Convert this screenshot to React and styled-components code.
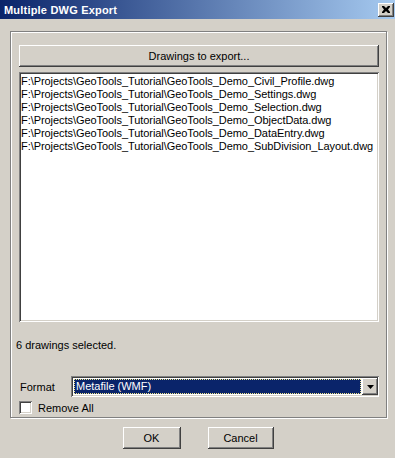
import React from "react";
import styled, { createGlobalStyle } from "styled-components";

const GlobalStyle = createGlobalStyle`
  body {
    margin: 0;
    font-family: "Liberation Sans", Arial, sans-serif;
    font-size: 11px;
    color: #000;
    background: #d4d0c8;
  }
`;

const files = [
  "F:\\Projects\\GeoTools_Tutorial\\GeoTools_Demo_Civil_Profile.dwg",
  "F:\\Projects\\GeoTools_Tutorial\\GeoTools_Demo_Settings.dwg",
  "F:\\Projects\\GeoTools_Tutorial\\GeoTools_Demo_Selection.dwg",
  "F:\\Projects\\GeoTools_Tutorial\\GeoTools_Demo_ObjectData.dwg",
  "F:\\Projects\\GeoTools_Tutorial\\GeoTools_Demo_DataEntry.dwg",
  "F:\\Projects\\GeoTools_Tutorial\\GeoTools_Demo_SubDivision_Layout.dwg",
];

const raised = `
  box-shadow: inset -1px -1px #404040, inset 1px 1px #ffffff,
    inset -2px -2px #808080, inset 2px 2px #d4d0c8;
`;

const sunken = `
  box-shadow: inset 1px 1px #808080, inset -1px -1px #ffffff,
    inset 2px 2px #404040, inset -2px -2px #d4d0c8;
`;

const Window = styled.div`
  width: 395px;
  height: 458px;
  background: #d4d0c8;
  display: flex;
  flex-direction: column;
  overflow: hidden;
`;

const TitleBar = styled.div`
  height: 19px;
  display: flex;
  align-items: center;
  justify-content: space-between;
  padding: 0 1px 0 4px;
  box-sizing: border-box;
  background: linear-gradient(to right, #0a246a, #a6caf0);
`;

const Title = styled.span`
  color: #fff;
  font-weight: bold;
  font-size: 11px;
  letter-spacing: 0.2px;
`;

const CloseButton = styled.div`
  width: 16px;
  height: 14px;
  background: #d4d0c8;
  display: flex;
  align-items: center;
  justify-content: center;
  ${raised}
`;

const Body = styled.div`
  padding: 12px 8px 0 10px;
  display: flex;
  flex-direction: column;
`;

const GroupBox = styled.div`
  height: 387px;
  box-sizing: border-box;
  border: 1px solid #808080;
  box-shadow: inset 1px 1px #ffffff, 1px 1px #ffffff;
  padding: 13px 7px 0 8px;
  display: flex;
  flex-direction: column;
`;

const PushButton = styled.div`
  height: 22px;
  width: ${(p) => (p.$width ? `${p.$width}px` : "auto")};
  box-sizing: border-box;
  display: flex;
  align-items: center;
  justify-content: center;
  background: #d4d0c8;
  ${raised}
`;

const ListBox = styled.div`
  margin-top: 5px;
  height: 250px;
  background: #fff;
  box-sizing: border-box;
  padding: 3px 2px;
  ${sunken}
`;

const ListItem = styled.div`
  height: 13px;
  line-height: 13px;
  white-space: nowrap;
  letter-spacing: -0.06px;
`;

const Status = styled.div`
  margin: 17px 0 0 -3px;
  line-height: 13px;
`;

const FormatRow = styled.div`
  margin-top: 24px;
  display: flex;
  align-items: center;
`;

const Label = styled.span`
  width: 51px;
  padding-left: 1px;
`;

const Combo = styled.div`
  flex: 1;
  height: 21px;
  background: #fff;
  box-sizing: border-box;
  padding: 3px 2px 3px 3px;
  display: flex;
  align-items: center;
  gap: 1px;
  ${sunken}
`;

const ComboValue = styled.div`
  flex: 1;
  height: 15px;
  line-height: 15px;
  background: #0a246a;
  color: #fff;
  padding-left: 2px;
  outline: 1px dotted #f0e68c;
  outline-offset: -1px;
`;

const ComboArrow = styled.div`
  width: 16px;
  height: 17px;
  margin-right: -1px;
  background: #d4d0c8;
  display: flex;
  align-items: center;
  justify-content: center;
  ${raised}
`;

const CheckRow = styled.label`
  margin-top: 4px;
  display: flex;
  align-items: center;
  gap: 6px;
`;

const CheckBox = styled.span`
  width: 13px;
  height: 13px;
  background: #fff;
  ${sunken}
`;

const ButtonRow = styled.div`
  margin-top: 9px;
  display: flex;
  justify-content: center;
  gap: 27px;
  padding-right: 1px;
`;

export default function App() {
  return (
    <>
      <GlobalStyle />
      <Window>
        <TitleBar>
          <Title>Multiple DWG Export</Title>
          <CloseButton>
            <svg width="8" height="7" viewBox="0 0 8 7">
              <path d="M0 0h2l2 2 2-2h2v1L6 3.5 8 6v1H6L4 5 2 7H0V6l2-2.5L0 1z" fill="#000" />
            </svg>
          </CloseButton>
        </TitleBar>
        <Body>
          <GroupBox>
            <PushButton>Drawings to export...</PushButton>
            <ListBox>
              {files.map((f) => (
                <ListItem key={f}>{f}</ListItem>
              ))}
            </ListBox>
            <Status>6 drawings selected.</Status>
            <FormatRow>
              <Label>Format</Label>
              <Combo>
                <ComboValue>Metafile (WMF)</ComboValue>
                <ComboArrow>
                  <svg width="7" height="4" viewBox="0 0 7 4">
                    <path d="M0 0h7L3.5 4z" fill="#000" />
                  </svg>
                </ComboArrow>
              </Combo>
            </FormatRow>
            <CheckRow>
              <CheckBox />
              <span>Remove All</span>
            </CheckRow>
          </GroupBox>
          <ButtonRow>
            <PushButton $width={58}>OK</PushButton>
            <PushButton $width={66}>Cancel</PushButton>
          </ButtonRow>
        </Body>
      </Window>
    </>
  );
}
